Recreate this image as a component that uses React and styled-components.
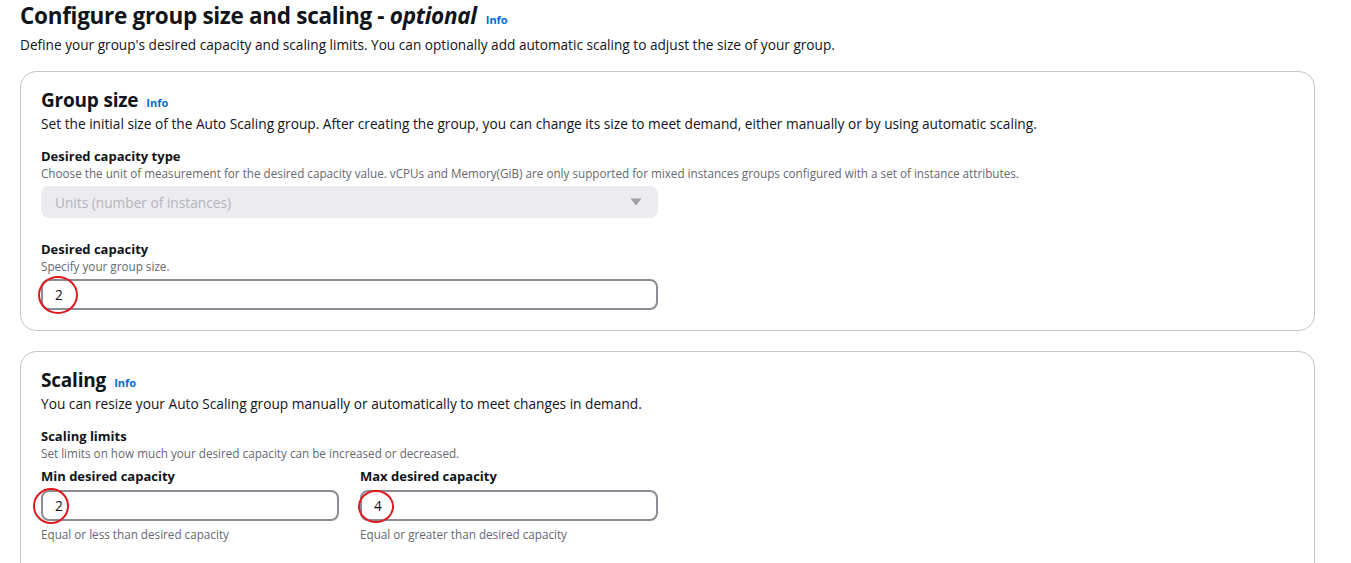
import React from "react";
import styled, { createGlobalStyle } from "styled-components";

const Global = createGlobalStyle`
  html, body { margin: 0; padding: 0; background: #ffffff; }
  body {
    font-family: "Open Sans", "Noto Sans", Arial, sans-serif;
    color: #0f141a;
    -webkit-font-smoothing: antialiased;
  }
`;

const Page = styled.div`
  padding: 1px 36px 0 20px;
  display: flex;
  flex-direction: column;
`;

const Title = styled.h1`
  margin: 0;
  font-size: 22.5px;
  line-height: 30px;
  font-weight: 700;
  letter-spacing: -0.3px;
  display: flex;
  align-items: baseline;
  gap: 9px;
  em { font-style: italic; font-weight: 700; }
`;

const InfoLink = styled.a`
  font-size: 11px;
  line-height: 12px;
  font-weight: 700;
  color: #006ce0;
  text-decoration: none;
  letter-spacing: 0;
`;

const Lead = styled.p`
  margin: 4px 0 0;
  font-size: 13.65px;
  line-height: 20px;
  color: #0f141a;
`;

const Stack = styled.div`
  display: flex;
  flex-direction: column;
  gap: 20px;
  margin-top: 16px;
`;

const Card = styled.section`
  border: 1px solid #c6c6cd;
  border-radius: 16px;
  padding: 16px 20px 20px 20px;
  min-height: ${(p) => p.$minHeight || "auto"};
  box-sizing: border-box;
`;

const CardTitle = styled.h2`
  margin: 0;
  font-size: 19px;
  line-height: 24px;
  font-weight: 700;
  letter-spacing: -0.2px;
  display: flex;
  align-items: baseline;
  gap: 8px;
`;

const CardText = styled.p`
  margin: 2px 0 0;
  font-size: 13.7px;
  line-height: 20px;
`;

const Field = styled.div`
  margin-top: ${(p) => p.$mt || "12px"};
  display: flex;
  flex-direction: column;
  width: ${(p) => p.$width || "auto"};
`;

const Control = styled.div`
  width: ${(p) => p.$width || "617px"};
`;

const Label = styled.div`
  font-size: 13px;
  line-height: 18px;
  font-weight: 700;
`;

const Constraint = styled.div`
  font-size: 11.7px;
  line-height: 16px;
  color: #656871;
  margin-top: ${(p) => p.$mt || "0"};
  white-space: nowrap;
`;

const Select = styled.div`
  margin-top: 5px;
  height: 32px;
  box-sizing: border-box;
  border-radius: 8px;
  background: #ebebf0;
  display: flex;
  align-items: center;
  justify-content: space-between;
  padding: 0 16px 0 14px;
  font-size: 13.7px;
  color: #b4b4bb;
`;

const InputWrap = styled.div`
  position: relative;
  margin-top: ${(p) => p.$mt || "5px"};
`;

const Input = styled.div`
  height: 31px;
  box-sizing: border-box;
  border: 2px solid #8c8c94;
  border-radius: 8px;
  display: flex;
  align-items: center;
  padding-left: 12px;
  font-size: 13.7px;
  color: #0f141a;
`;

const Circle = styled.span`
  position: absolute;
  left: ${(p) => p.$x}px;
  top: ${(p) => p.$y}px;
  width: ${(p) => p.$w}px;
  height: ${(p) => p.$h}px;
  border: 2px solid #e0191f;
  border-radius: 50%;
  box-sizing: border-box;
  pointer-events: none;
`;

const Row = styled.div`
  display: flex;
  gap: 21px;
  margin-top: 6px;
`;

const Arrow = () => (
  <svg width="12" height="8" viewBox="0 0 12 8">
    <path d="M0.5 0.5 H11.5 L6 7.5 Z" fill="#a0a0a6" />
  </svg>
);

export default function App() {
  return (
    <>
      <Global />
      <Page>
        <Title>
          <span>
            Configure group size and scaling - <em>optional</em>
          </span>
          <InfoLink href="#">Info</InfoLink>
        </Title>
        <Lead>
          Define your group's desired capacity and scaling limits. You can optionally add automatic scaling to adjust the size of your group.
        </Lead>
        <Stack>
          <Card>
            <CardTitle>
              Group size <InfoLink href="#">Info</InfoLink>
            </CardTitle>
            <CardText>
              Set the initial size of the Auto Scaling group. After creating the group, you can change its size to meet demand, either manually or by using automatic scaling.
            </CardText>
            <Field $mt="13px">
              <Label>Desired capacity type</Label>
              <Constraint>
                Choose the unit of measurement for the desired capacity value. vCPUs and Memory(GiB) are only supported for mixed instances groups configured with a set of instance attributes.
              </Constraint>
              <Control>
                <Select>
                  <span>Units (number of instances)</span>
                  <Arrow />
                </Select>
              </Control>
            </Field>
            <Field $mt="22px">
              <Label>Desired capacity</Label>
              <Constraint>Specify your group size.</Constraint>
              <Control>
                <InputWrap $mt="5px">
                  <Input>2</Input>
                  <Circle $x={-3} $y={-3} $w={40} $h={38} />
                </InputWrap>
              </Control>
            </Field>
          </Card>
          <Card $minHeight="240px">
            <CardTitle>
              Scaling <InfoLink href="#">Info</InfoLink>
            </CardTitle>
            <CardText>
              You can resize your Auto Scaling group manually or automatically to meet changes in demand.
            </CardText>
            <Field $mt="13px">
              <Label>Scaling limits</Label>
              <Constraint>Set limits on how much your desired capacity can be increased or decreased.</Constraint>
              <Row>
                <Field $width="298px" $mt="0">
                  <Label>Min desired capacity</Label>
                  <Control $width="298px">
                    <InputWrap $mt="5px">
                      <Input>2</Input>
                      <Circle $x={-8} $y={-2} $w={36} $h={36} />
                    </InputWrap>
                  </Control>
                  <Constraint $mt="5px">Equal or less than desired capacity</Constraint>
                </Field>
                <Field $width="298px" $mt="0">
                  <Label>Max desired capacity</Label>
                  <Control $width="298px">
                    <InputWrap $mt="5px">
                      <Input>4</Input>
                      <Circle $x={-2} $y={0} $w={36} $h={33} />
                    </InputWrap>
                  </Control>
                  <Constraint $mt="5px">Equal or greater than desired capacity</Constraint>
                </Field>
              </Row>
            </Field>
          </Card>
        </Stack>
      </Page>
    </>
  );
}
